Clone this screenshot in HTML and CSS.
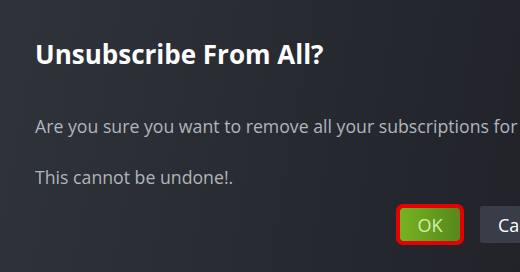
FILE: index.html
```html
<!DOCTYPE html>
<html lang="en">
<head>
    <meta charset="UTF-8">
    <meta name="viewport" content="width=device-width, initial-scale=1.0">
    <title>Unsubscribe From All?</title>
    <link rel="stylesheet" href="styles.css">
</head>
<body>
    <div class="dialog">
        <h2 class="dialog-title">Unsubscribe From All?</h2>

        <div class="dialog-body">
            <p>Are you sure you want to remove all your subscriptions for Deep Rock Galactic?</p>
            <p>This cannot be undone!.</p>
        </div>

        <div class="dialog-buttons">
            <button class="btn btn-ok">OK</button>
            <button class="btn btn-cancel">Cancel</button>
        </div>
    </div>
</body>
</html>
```

FILE: styles.css
```css
html, body {
    margin: 0;
    height: 100%;
    overflow: hidden;
}

body {
    font-family: "Open Sans", "Noto Sans", Arial, sans-serif;
    background: linear-gradient(100deg, #2f333a 0%, #272a31 55%, #212329 100%);
}

.dialog {
    width: 640px;
    padding: 38px 0 0 35px;
    box-sizing: border-box;
}

.dialog-title {
    margin: 0;
    color: #ffffff;
    font-size: 26px;
    font-weight: 700;
    line-height: 32px;
}

.dialog-body {
    margin-top: 44px;
    color: #b0b6bd;
    font-size: 17.7px;
    line-height: 24px;
}

.dialog-body p {
    margin: 0 0 27px 0;
    white-space: nowrap;
}

.dialog-buttons {
    display: flex;
    align-items: center;
    gap: 20px;
    margin-top: -10px;
    padding-left: 365px;
}

.btn {
    font-family: inherit;
    font-size: 18px;
    border: none;
    border-radius: 2px;
    padding: 0;
    cursor: pointer;
}

.btn-ok {
    width: 60px;
    height: 33px;
    background: linear-gradient(to right, #75b022 5%, #588a1b 95%);
    color: #d2efa9;
    outline: 4px solid #e60000;
    border-radius: 3px;
}

.btn-cancel {
    height: 37px;
    padding: 0 18px;
    background: #383d48;
    color: #ffffff;
}
```
